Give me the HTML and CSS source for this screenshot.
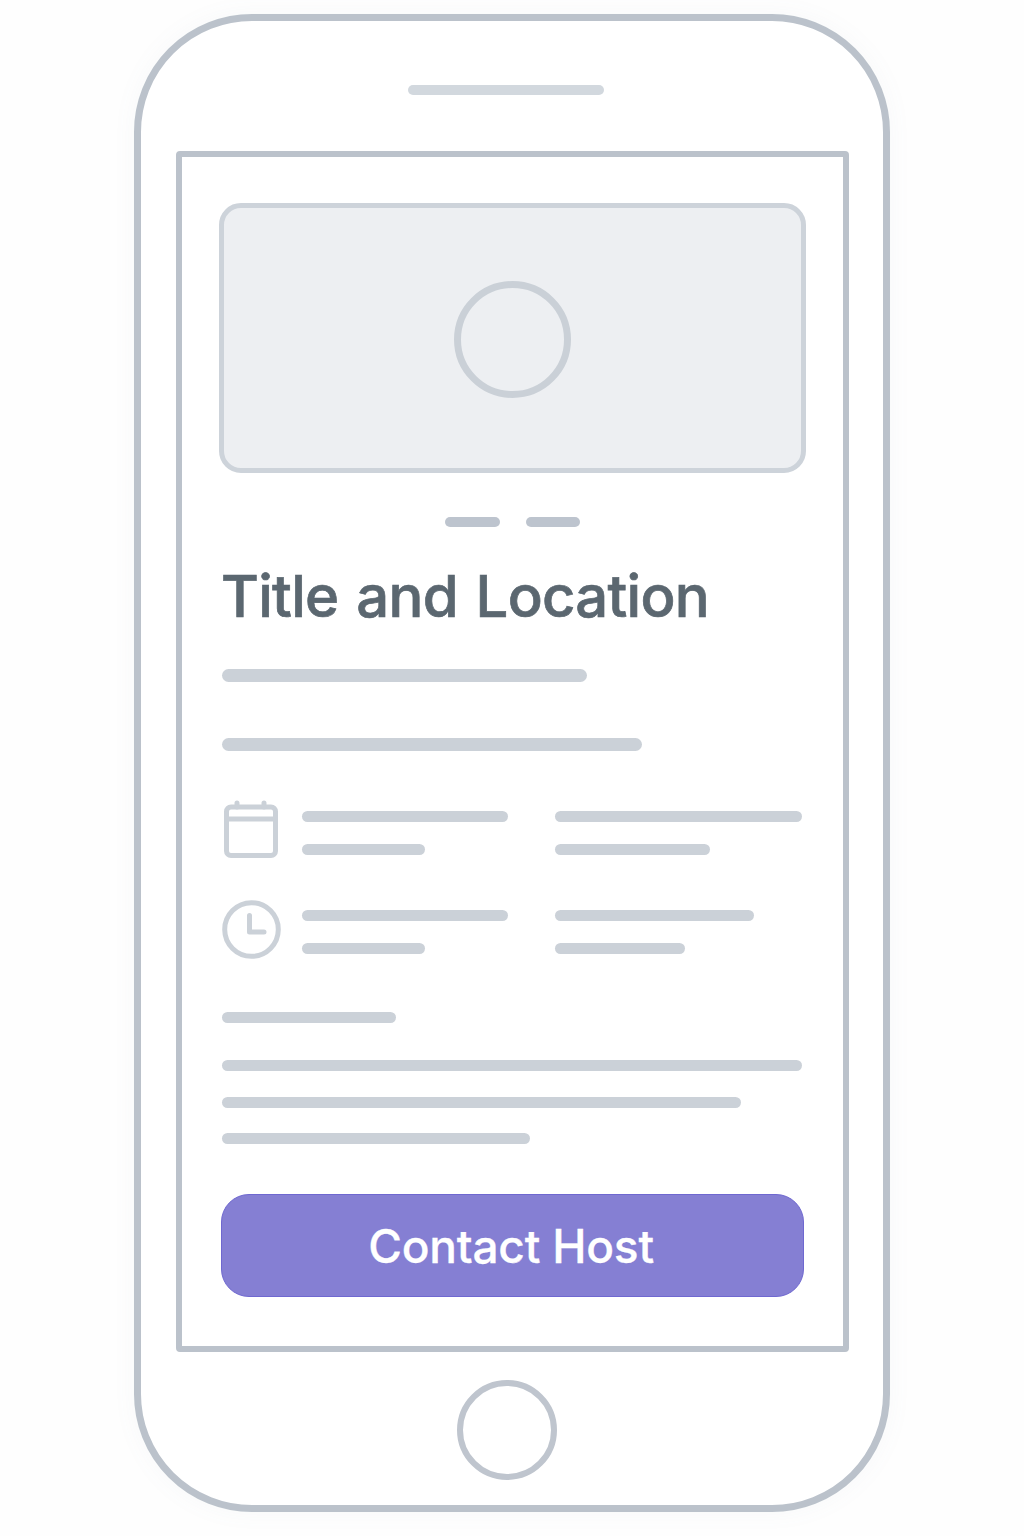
FILE: index.html
```html
<!DOCTYPE html>
<html lang="en">
<head>
  <meta charset="UTF-8">
  <title>Listing Wireframe</title>
  <link rel="stylesheet" href="styles.css">
</head>
<body>

  <div class="phone">
    <div class="speaker"></div>

    <div class="screen">
      <div class="hero">
        <div class="hero-circle"></div>
      </div>

      <div class="dots">
        <span class="dot dot-a"></span>
        <span class="dot dot-b"></span>
      </div>

      <h1 class="title">Title and Location</h1>

      <div class="bar bar-lg w-365 subtitle"></div>
      <div class="bar bar-lg w-420 price"></div>

      <div class="info-row info-first">
        <svg class="icon calendar" width="54" height="58" viewBox="0 0 54 58" fill="none">
          <rect x="2.5" y="7" width="49" height="48.5" rx="4.5" stroke="#cbd1d8" stroke-width="5"/>
          <path d="M2 19H52" stroke="#cbd1d8" stroke-width="5"/>
          <path d="M13 3V7M40 3V7" stroke="#cbd1d8" stroke-width="5" stroke-linecap="round"/>
        </svg>
        <div class="info-col">
          <div class="bar w-206"></div>
          <div class="bar w-123"></div>
        </div>
        <div class="info-col">
          <div class="bar w-247"></div>
          <div class="bar w-155"></div>
        </div>
      </div>

      <div class="info-row info-second">
        <svg class="icon clock" width="59" height="59" viewBox="0 0 59 59" fill="none">
          <circle cx="29.5" cy="29.5" r="26.8" stroke="#cbd1d8" stroke-width="5"/>
          <path d="M27.5 15.5V32H42" stroke="#cbd1d8" stroke-width="5" stroke-linecap="round" stroke-linejoin="round"/>
        </svg>
        <div class="info-col">
          <div class="bar w-206"></div>
          <div class="bar w-123"></div>
        </div>
        <div class="info-col">
          <div class="bar w-199"></div>
          <div class="bar w-130"></div>
        </div>
      </div>

      <div class="about">
        <div class="bar w-174"></div>
        <div class="bar w-580 line-1"></div>
        <div class="bar w-519 line-2"></div>
        <div class="bar w-308 line-3"></div>
      </div>

      <button class="contact" type="button">Contact Host</button>
    </div>

    <div class="home-button"></div>
  </div>

</body>
</html>
```

FILE: styles.css
```css
* {
  box-sizing: border-box;
  margin: 0;
  padding: 0;
}
html, body {
  height: 100%;
  font-family: Inter, 'Noto Sans', sans-serif;
  background-color: #fefefe;
}
body {
  padding: 14px 0 0 134px;
}
.phone {
  width: 756px;
  height: 1498px;
  padding: 64px 0 0;
  background: #fff;
  border: 7px solid #bbc2cb;
  border-radius: 118px;
  box-shadow: 0 0 24px rgba(120, 130, 150, 0.05);
}
.speaker {
  width: 196px;
  height: 10px;
  margin-left: 267px;
  border-radius: 5px;
  background-color: #d2d8de;
}
.screen {
  width: 673px;
  height: 1201px;
  margin: 56px 0 0 35px;
  padding: 46px 0 0 37px;
  border: 6px solid #bbc2cb;
  border-radius: 4px;
}
.hero {
  display: flex;
  justify-content: center;
  align-items: center;
  width: 587px;
  height: 270px;
  padding: 2px 1px 0 0;
  background-color: #edeff2;
  border: 5px solid #cdd3da;
  border-radius: 22px;
}
.hero-circle {
  width: 117px;
  height: 117px;
  border: 7px solid #cad0d7;
  border-radius: 50%;
}
.dots {
  display: flex;
  gap: 26px;
  margin: 44px 0 0 226px;
}
.dot {
  height: 10px;
  border-radius: 5px;
  background-color: #bdc4ce;
}
.dot-a {
  width: 55px;
}
.dot-b {
  width: 54px;
}
.title {
  height: 64px;
  margin: 37px 0 0 2px;
  font-size: 58px;
  font-weight: 500;
  letter-spacing: -0.7px;
  word-spacing: 3px;
  line-height: 64px;
  color: #5b6770;
  -webkit-text-stroke: 0.7px #5b6770;
  white-space: nowrap;
}
.bar {
  height: 11px;
  border-radius: 6px;
  background-color: #cbd1d8;
}
.bar-lg {
  height: 13px;
  border-radius: 7px;
}
.subtitle {
  margin: 41px 0 0 3px;
}
.price {
  margin: 56px 0 0 3px;
}
.w-123 { width: 123px; }
.w-130 { width: 130px; }
.w-155 { width: 155px; }
.w-174 { width: 174px; }
.w-199 { width: 199px; }
.w-206 { width: 206px; }
.w-247 { width: 247px; }
.w-308 { width: 308px; }
.w-365 { width: 365px; }
.w-420 { width: 420px; }
.w-519 { width: 519px; }
.w-580 { width: 580px; }
.info-row {
  display: grid;
  grid-template-columns: 80px 253px 1fr;
  margin-left: 3px;
}
.info-first {
  margin-top: 49px;
  height: 59px;
}
.info-first .info-col {
  padding-top: 11px;
}
.info-second {
  margin-top: 41px;
  height: 59px;
}
.info-second .info-col {
  padding-top: 10px;
}
.info-col {
  display: flex;
  flex-direction: column;
  gap: 22px;
}
.icon {
  display: block;
}
.calendar {
  margin-left: 2px;
}
.about {
  margin: 53px 0 0 3px;
}
.line-1 {
  margin-top: 37px;
}
.line-2 {
  margin-top: 26px;
}
.line-3 {
  margin-top: 25px;
}
.contact {
  display: block;
  width: 583px;
  height: 103px;
  padding-right: 3px;
  margin: 50px 0 0 2px;
  background-color: #857fd3;
  border: 1px solid #6f68d0;
  border-radius: 28px;
  color: #fff;
  font-family: inherit;
  font-size: 46px;
  font-weight: 500;
  letter-spacing: -0.2px;
  -webkit-text-stroke: 0.3px #fff;
}
.home-button {
  width: 100px;
  height: 100px;
  margin: 28px 0 0 316px;
  border: 6px solid #bfc5ce;
  border-radius: 50%;
}
```
